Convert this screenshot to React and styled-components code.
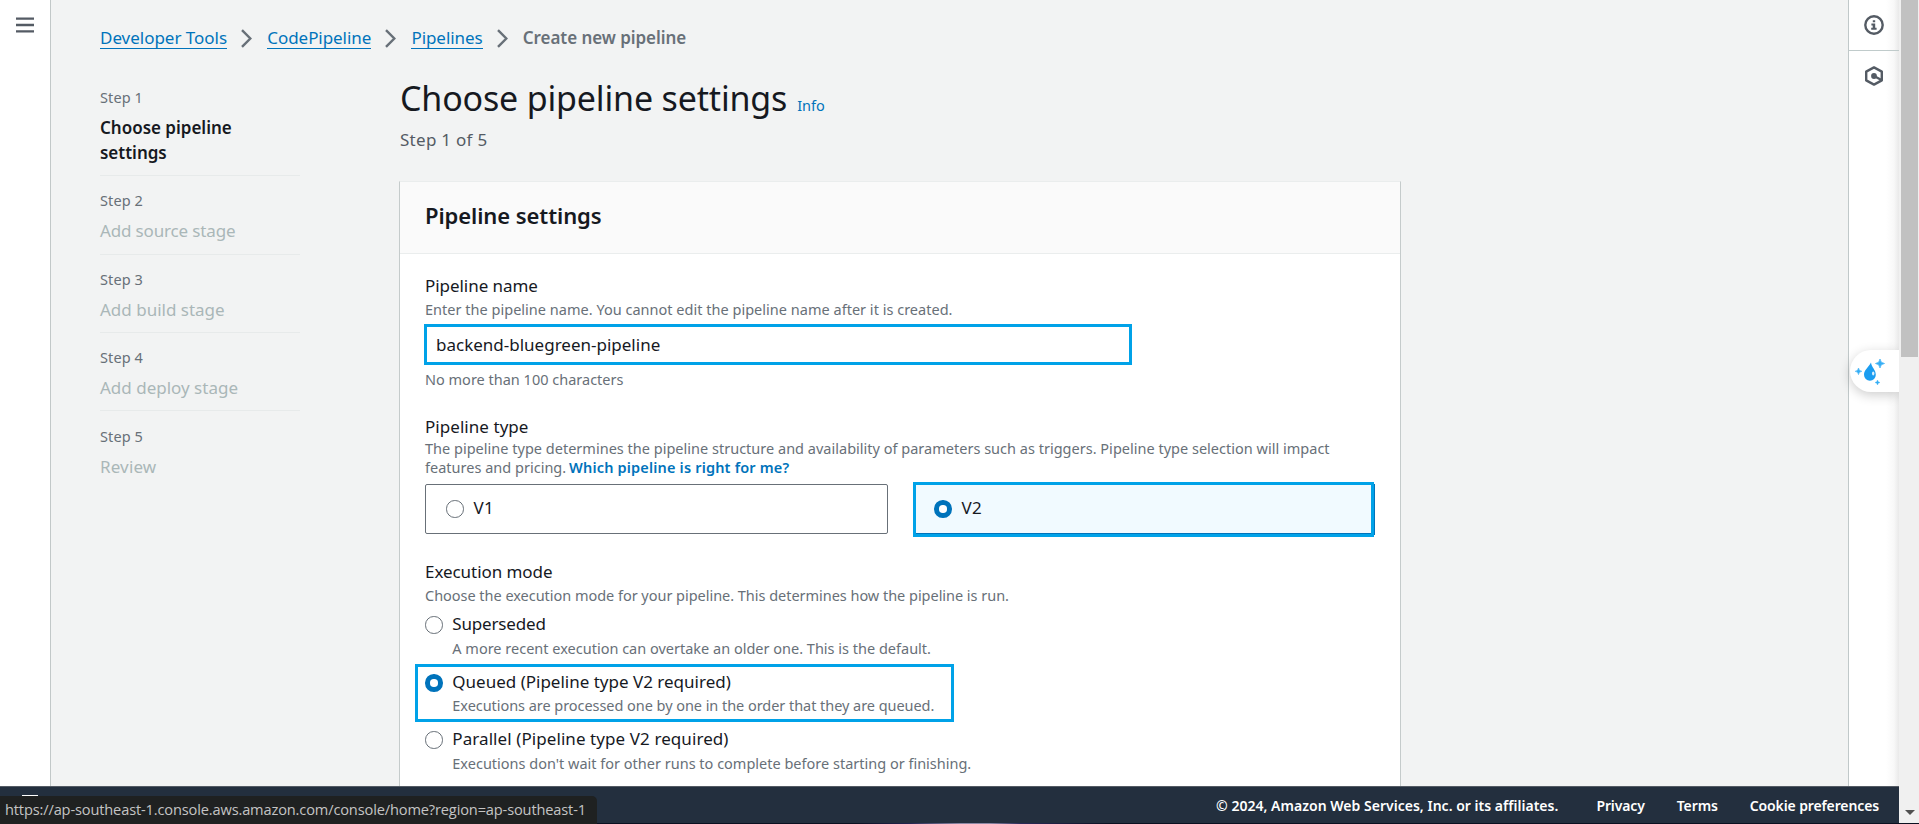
import React from 'react';
import styled, { createGlobalStyle, css } from 'styled-components';

const GlobalStyle = createGlobalStyle`
  * { box-sizing: border-box; }
  html, body { margin: 0; padding: 0; overflow: hidden; }
  body {
    font-family: "Noto Sans", "Open Sans", sans-serif;
    font-size: 17px;
    line-height: 25px;
    color: #16191f;
    background: #fff;
  }
`;

const smallText = css`
  font-size: 14.5px;
  line-height: 20px;
  color: #687078;
`;

const tracking = css`
  letter-spacing: ${(p) => p.$ls || 0}px;
`;

const Window = styled.div`
  position: relative;
  display: flex;
  flex-direction: column;
  width: 1919px;
  height: 824px;
  overflow: hidden;
`;

const Viewport = styled.div`
  display: flex;
  height: 823px;
`;

const Page = styled.div`
  display: flex;
  flex-direction: column;
  width: 1899px;
`;

const Body = styled.div`
  display: flex;
  height: 786px;
  overflow: hidden;
`;

const NavRail = styled.nav`
  width: 51px;
  flex: none;
  padding: 17px 0 0 16px;
  border-right: 1px solid #c2c8c8;
  background: #fff;
`;

const Content = styled.main`
  flex: 1;
  min-width: 0;
  padding: 25px 0 0 49px;
  background: #f2f3f3;
`;

const Breadcrumbs = styled.div`
  display: flex;
  align-items: flex-start;
  height: 25px;
`;

const Crumb = styled.a`
  color: #0073bb;
  height: 24px;
  border-bottom: 1px solid #0073bb;
  ${tracking}
`;

const CurrentCrumb = styled.span`
  color: #687078;
  font-weight: 600;
  ${tracking}
`;

const ChevronIcon = styled.svg`
  width: 11px;
  height: 19px;
  margin: 4px 15px 0 14.2px;
  fill: none;
  stroke: #687078;
  stroke-width: 2.4;
`;

const Columns = styled.div`
  display: flex;
`;

const Steps = styled.ol`
  width: 200px;
  flex: none;
  list-style: none;
  margin: 0 100px 0 0;
  padding: 22.7px 0 0;
`;

const Step = styled.li`
  padding: 14.1px 0 10.1px;
  border-bottom: 1px solid #e7eaea;
  &:nth-child(2) { padding-bottom: 10.6px; }
  &:last-child { border-bottom: 0; padding-top: 14.7px; }
`;

const StepNumber = styled.div`
  ${smallText}
  letter-spacing: 0.1px;
  margin-bottom: 8px;
`;

const StepTitle = styled.div`
  color: ${(p) => (p.$active ? '#16191f' : '#aab7b8')};
  font-weight: ${(p) => (p.$active ? 600 : 400)};
  width: 160px;
  ${tracking}
`;

const Form = styled.section`
  width: 1002px;
  margin-left: -1px;
  padding-top: 26px;
`;

const TitleRow = styled.div`
  display: flex;
  align-items: baseline;
  gap: 10px;
  height: 44px;
  padding-left: 1px;
`;

const Title = styled.h1`
  margin: 0;
  font-size: 34px;
  line-height: 44px;
  font-weight: 400;
  letter-spacing: -0.17px;
`;

const InfoLink = styled.a`
  font-size: 14.5px;
  line-height: 20px;
  color: #0073bb;
`;

const Subtitle = styled.p`
  margin: 7px 0 29px 1px;
  color: #545b64;
  letter-spacing: 0.28px;
`;

const Card = styled.div`
  height: 660px;
  background: #fff;
  border: 1px solid #c5cbcb;
  border-top-color: #eaeded;
`;

const CardHeader = styled.header`
  height: 72px;
  padding: 18px 25px 0;
  background: #fafafa;
  border-bottom: 1px solid #eaeded;
`;

const CardTitle = styled.h2`
  margin: 0;
  font-size: 22px;
  line-height: 30px;
  font-weight: 600;
  letter-spacing: -0.08px;
`;

const CardBody = styled.div`
  padding: 19px 25px 0;
`;

const Field = styled.div`
  margin-bottom: ${(p) => p.$after || 0}px;
`;

const Label = styled.div`
  ${tracking}
`;

const Description = styled.div`
  ${smallText}
  margin-top: ${(p) => p.$top || 0}px;
  line-height: ${(p) => p.$lh || 20}px;
  white-space: nowrap;
  ${tracking}
`;

const HelpLink = styled.a`
  margin-left: -1px;
  color: #0073bb;
  font-weight: 600;
  letter-spacing: ${(p) => p.$ls || 0}px;
`;

const TextInput = styled.input`
  display: block;
  width: 708px;
  height: 41px;
  margin: 5px 0 4px -1px;
  padding: 0 9px;
  border: 3px solid #00a2e8;
  outline: none;
  background: #fff;
  color: #16191f;
  font: inherit;
`;

const Tiles = styled.div`
  display: flex;
  align-items: center;
  gap: 25px;
  height: 55px;
  margin-top: 5px;
`;

const Tile = styled.label`
  display: flex;
  gap: 10px;
  width: 463px;
  height: 50px;
  margin-top: -1px;
  padding: 10px 20px;
  border: 1px solid #687078;
  border-radius: 2px;
  ${(p) =>
    p.$selected &&
    css`
      width: 461px;
      height: 55px;
      margin-top: 0;
      padding: 10px 18px;
      background: #f1faff;
      border: 3px solid #00a2e8;
      border-radius: 0;
      box-shadow: inset 0 -1px 0 #0073bb, 3px 0 0 -2px #0073bb;
    `}
`;

const Radio = styled.span`
  flex: none;
  width: 17.5px;
  height: 17.5px;
  margin-top: 5px;
  border-radius: 50%;
  background: #fff;
  border: ${(p) => (p.$checked ? '5.5px solid #0073bb' : '1.4px solid #687078')};
`;

const Option = styled.label`
  display: flex;
  gap: 9.8px;
  width: max-content;
  margin-top: ${(p) => p.$top || 0}px;
  ${(p) =>
    p.$marked &&
    css`
      width: 539px;
      height: 58px;
      margin-left: -10px;
      padding: 2px 7px;
      border: 3px solid #00a2e8;
    `}
`;

const Footer = styled.footer`
  display: flex;
  align-items: center;
  justify-content: flex-end;
  height: 37px;
  padding: 1px 20px 0 0;
  background: #232f3e;
  border-top: 1px solid #545b64;
  color: #fff;
  font-size: 14px;
  font-weight: 600;
  line-height: 20px;
`;

const Copyright = styled.span`
  margin-right: 38px;
  ${tracking}
`;

const FooterLink = styled.a`
  color: #fff;
  letter-spacing: -0.12px;
  & + & { margin-left: 32px; }
`;

const ToolsRail = styled.aside`
  display: flex;
  flex-direction: column;
  width: 51px;
  flex: none;
  border-left: 1px solid #c0c8c9;
  background: linear-gradient(to left, #e9e9e9 0, #f8f8f8 5px, #fff 13px);
`;

const ToolButton = styled.div`
  display: flex;
  justify-content: center;
  align-items: center;
  height: ${(p) => (p.$divided ? 51 : 50)}px;
  border-bottom: ${(p) => (p.$divided ? '1px solid #c0cbcb' : '0')};
`;

const Scrollbar = styled.div`
  display: flex;
  flex-direction: column;
  justify-content: space-between;
  align-items: center;
  width: 20px;
  padding: 0 1px 8px 2px;
  background: #f0f0f0;
`;

const Thumb = styled.div`
  width: 17px;
  height: 357px;
  background: #c1c1c1;
`;

const ScrollArrow = styled.div`
  border: 5px solid transparent;
  border-top: 5px solid #505050;
  border-bottom: 0;
`;

const BottomEdge = styled.div`
  height: 1px;
  background: linear-gradient(to right, #0b1020 0, #0b1020 855px, #23244f 910px, #8c88a4 960px, #8c88a4 990px, #2b2a58 1020px, #0b1020 1110px);
`;

const AssistantTab = styled.div`
  position: absolute;
  top: 350px;
  left: 1850px;
  width: 49px;
  height: 42px;
  border-radius: 21px 0 0 21px;
  background: #fff;
  box-shadow: 0 3px 12px rgba(0, 0, 0, 0.2);
  clip-path: inset(-24px 0 -24px -24px);
`;

const StatusBubble = styled.div`
  position: absolute;
  left: 0;
  top: 796px;
  width: 597px;
  height: 28px;
  padding: 3px 0 0 5px;
  border-top-right-radius: 5px;
  background: #1f2121;
  color: #c4c4c4;
  font-family: "Open Sans", "Noto Sans", sans-serif;
  font-size: 14.6px;
  line-height: 20px;
  letter-spacing: -0.14px;
  white-space: nowrap;
`;

const TerminalHint = styled.div`
  position: absolute;
  left: 22px;
  top: 795px;
  width: 16px;
  height: 1px;
  background: #fff;
`;

const Chevron = () => (
  <ChevronIcon viewBox="0 0 11 19">
    <path d="M1 1.2L9.3 9.5L1 17.8" />
  </ChevronIcon>
);

const MenuIcon = () => (
  <svg width="18" height="16" viewBox="0 0 18 16" display="block">
    <path d="M0 1.7H18M0 8H18M0 14.3H18" stroke="#545b64" strokeWidth="2.3" />
  </svg>
);

const InfoIcon = () => (
  <svg width="20" height="20" viewBox="0 0 20 20" fill="none">
    <circle cx="10" cy="10" r="8.7" stroke="#545b64" strokeWidth="2.4" />
    <path d="M8.8 5.2h2.4v2H8.8zM7.4 8.4h3.8v4.4h1.4v2H7.2v-2h1.5v-2.4H7.4z" fill="#545b64" />
  </svg>
);

const HexIcon = () => (
  <svg width="20" height="20" viewBox="0 0 20 20" fill="none">
    <path d="M10 1.4L17.8 5.6V14.4L10 18.6L2.2 14.4V5.6Z" stroke="#545b64" strokeWidth="2.4" strokeLinejoin="round" />
    <circle cx="10" cy="10" r="2.9" fill="#545b64" />
    <path d="M10 10L17.5 14" stroke="#545b64" strokeWidth="2.4" />
  </svg>
);

const DropIcon = () => (
  <svg width="49" height="42" viewBox="0 0 49 42">
    <path d="M21 12.5C21.5 17.5 25.8 19.5 25.8 24.8A5.9 5.9 0 0 1 14 24.8C14 19.8 18.5 17.5 21 12.5Z" fill="#1b9df0" />
    <ellipse cx="23.2" cy="23.5" rx="1.2" ry="2" fill="#d8f0ff" />
    <path d="M30 9Q30.4 13.1 34.5 13.5Q30.4 13.9 30 18Q29.6 13.9 25.5 13.5Q29.6 13.1 30 9Z" fill="#35aef5" stroke="#35aef5" strokeWidth=".7" />
    <path d="M8.5 18Q8.8 21 11.8 21.3Q8.8 21.6 8.5 24.6Q8.2 21.6 5.2 21.3Q8.2 21 8.5 18Z" fill="#35aef5" stroke="#35aef5" strokeWidth=".6" />
    <path d="M27.5 30Q27.7 32.3 30 32.5Q27.7 32.7 27.5 35Q27.3 32.7 25 32.5Q27.3 32.3 27.5 30Z" fill="#35aef5" stroke="#35aef5" strokeWidth=".4" />
  </svg>
);

const steps = [
  { title: 'Choose pipeline settings', active: true, ls: -0.01 },
  { title: 'Add source stage', ls: -0.15 },
  { title: 'Add build stage' },
  { title: 'Add deploy stage' },
  { title: 'Review', ls: 0.15 },
];

const modes = [
  { label: 'Superseded', text: 'A more recent execution can overtake an older one. This is the default.', top: 6, gap: 2, ls: -0.17 },
  { label: 'Queued (Pipeline type V2 required)', text: 'Executions are processed one by one in the order that they are queued.', top: 6, gap: 1, checked: true, textLs: -0.05 },
  { label: 'Parallel (Pipeline type V2 required)', text: "Executions don't wait for other runs to complete before starting or finishing.", top: 4, gap: 2, ls: 0.08 },
];

export default function App() {
  return (
    <Window>
      <GlobalStyle />
      <Viewport>
        <Page>
          <Body>
            <NavRail><MenuIcon /></NavRail>
            <Content>
              <Breadcrumbs>
                <Crumb $ls={-0.02}>Developer Tools</Crumb>
                <Chevron />
                <Crumb $ls={-0.06}>CodePipeline</Crumb>
                <Chevron />
                <Crumb $ls={-0.06}>Pipelines</Crumb>
                <Chevron />
                <CurrentCrumb $ls={-0.06}>Create new pipeline</CurrentCrumb>
              </Breadcrumbs>
              <Columns>
                <Steps>
                  {steps.map((s, i) => (
                    <Step key={s.title}>
                      <StepNumber>Step {i + 1}</StepNumber>
                      <StepTitle $active={s.active} $ls={s.ls}>{s.title}</StepTitle>
                    </Step>
                  ))}
                </Steps>
                <Form>
                  <TitleRow>
                    <Title>Choose pipeline settings</Title>
                    <InfoLink>Info</InfoLink>
                  </TitleRow>
                  <Subtitle>Step 1 of 5</Subtitle>
                  <Card>
                    <CardHeader><CardTitle>Pipeline settings</CardTitle></CardHeader>
                    <CardBody>
                      <Field $after={25}>
                        <Label $ls={-0.05}>Pipeline name</Label>
                        <Description $top={1} $ls={0.017}>Enter the pipeline name. You cannot edit the pipeline name after it is created.</Description>
                        <TextInput defaultValue="backend-bluegreen-pipeline" />
                        <Description>No more than 100 characters</Description>
                      </Field>
                      <Field $after={22}>
                        <Label $ls={0.05}>Pipeline type</Label>
                        <Description $lh={19} $ls={0.01}>
                          The pipeline type determines the pipeline structure and availability of parameters such as triggers. Pipeline type selection will impact
                          <br />
                          features and pricing. <HelpLink $ls={0.18}>Which pipeline is right for me?</HelpLink>
                        </Description>
                        <Tiles>
                          <Tile><Radio /><Label $ls={0.2}>V1</Label></Tile>
                          <Tile $selected><Radio $checked /><Label $ls={0.2}>V2</Label></Tile>
                        </Tiles>
                      </Field>
                      <Field>
                        <Label $ls={-0.06}>Execution mode</Label>
                        <Description $top={1} $ls={-0.03}>Choose the execution mode for your pipeline. This determines how the pipeline is run.</Description>
                        {modes.map((m) => (
                          <Option key={m.label} $top={m.top} $marked={m.checked}>
                            <Radio $checked={m.checked} />
                            <div>
                              <Label $ls={m.ls}>{m.label}</Label>
                              <Description $top={m.gap} $ls={m.textLs}>{m.text}</Description>
                            </div>
                          </Option>
                        ))}
                      </Field>
                    </CardBody>
                  </Card>
                </Form>
              </Columns>
            </Content>
            <ToolsRail>
              <ToolButton $divided><InfoIcon /></ToolButton>
              <ToolButton><HexIcon /></ToolButton>
            </ToolsRail>
          </Body>
          <Footer>
            <Copyright $ls={0.02}>© 2024, Amazon Web Services, Inc. or its affiliates.</Copyright>
            <FooterLink>Privacy</FooterLink>
            <FooterLink>Terms</FooterLink>
            <FooterLink>Cookie preferences</FooterLink>
          </Footer>
        </Page>
        <Scrollbar>
          <Thumb />
          <ScrollArrow />
        </Scrollbar>
      </Viewport>
      <BottomEdge />
      <AssistantTab><DropIcon /></AssistantTab>
      <TerminalHint />
      <StatusBubble>https://ap-southeast-1.console.aws.amazon.com/console/home?region=ap-southeast-1</StatusBubble>
    </Window>
  );
}
